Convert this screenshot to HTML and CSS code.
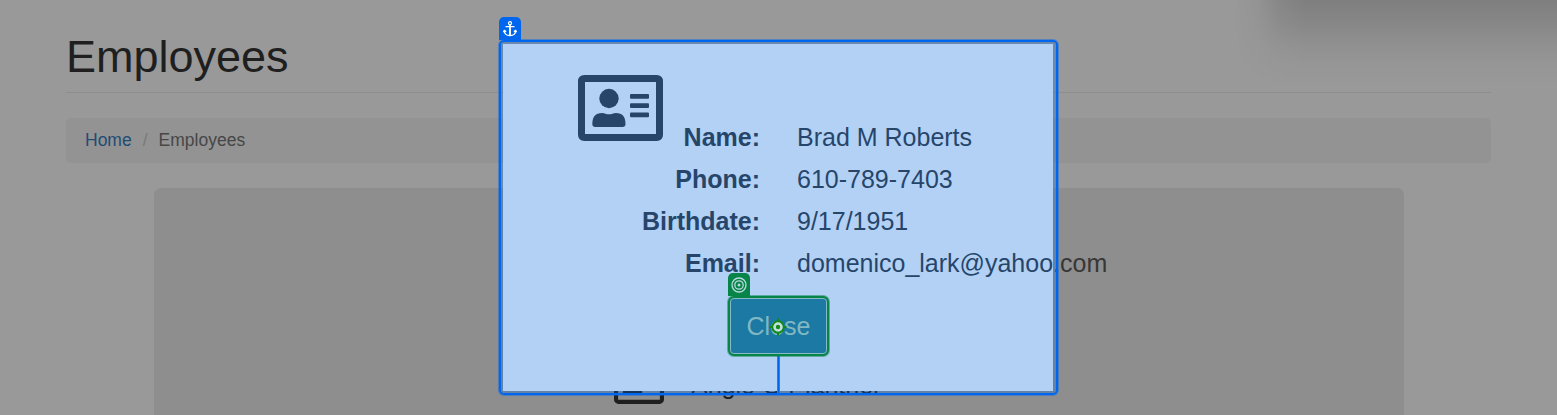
FILE: index.html
```
<!DOCTYPE html>
<html lang="en">
<head>
<meta charset="utf-8">
<title>Employees</title>
<link rel="stylesheet" href="styles.css">
</head>
<body>
<main class="page">
  <h1 class="title">Employees</h1>
  <nav class="breadcrumb"><a class="home">Home</a><span class="slash">/</span><span>Employees</span></nav>
  <section class="panel">
    <div class="entry">
      <svg class="entry-icon" viewBox="0 0 85 66"><rect x="3.5" y="3.5" width="78" height="59" rx="4" fill="none" stroke="currentColor" stroke-width="7"/><path d="M15 51V46Q15 38 24 38H40Q48 38 48 46V51Z" fill="currentColor"/></svg>
      <span class="entry-name">Angie G Plantner</span>
    </div>
  </section>
</main>
<div class="corner-shadow"></div>
<section class="modal">
  <div class="card">
    <svg class="id-icon" viewBox="0 0 85 66" fill="currentColor">
      <path fill-rule="evenodd" d="M6.500 0H78.500Q85 0 85 6.500V59.500Q85 66 78.500 66H6.500Q0 66 0 59.500V6.500Q0 0 6.500 0ZM7 7V59H78V7Z"/>
      <circle cx="31" cy="23.500" r="9.700"/>
      <path d="M14.300 49Q14.300 38 24 38Q26 38 27.500 38.700Q31 39.800 34.500 38.700Q36 38 38 38Q47.500 38 47.500 49Q47.500 52 44.500 52H17.300Q14.300 52 14.300 49Z"/>
      <rect x="52" y="19" width="19" height="4.700" rx="1"/><rect x="52" y="28.300" width="19" height="4.700" rx="1"/><rect x="52" y="37.600" width="19" height="4.700" rx="1"/>
    </svg>
    <dl class="details">
      <dt>Name:</dt><dd>Brad M Roberts</dd>
      <dt>Phone:</dt><dd>610-789-7403</dd>
      <dt>Birthdate:</dt><dd>9/17/1951</dd>
      <dt>Email:</dt><dd>domenico_lark@yahoo.com</dd>
    </dl>
  </div>
  <div class="highlight"></div>
  <span class="tag anchor-tag"><svg width="14" height="16" viewBox="0 0 14 16" fill="none" stroke="#fff" stroke-width="1.300"><circle cx="7" cy="2.200" r="1.500"/><path d="M2.500 5.600H11.500M1.200 9.500Q1.600 14.600 7 14.600Q12.400 14.600 12.800 9.500M.4 11.200L1.300 9.400L3.200 10.600M10.800 10.600L12.700 9.400L13.600 11.200"/><path d="M7 4V15" stroke-width="1.900"/></svg></span>
  <span class="connector"></span>
  <button class="close">Close</button>
  <span class="tag target-tag"><svg width="16" height="16" viewBox="0 0 16 16" fill="none" stroke="#b9d9df" stroke-width="1.300"><circle cx="8" cy="8" r="7"/><circle cx="8" cy="8" r="4.200"/><circle cx="8" cy="8" r="1.500" fill="#b9d9df" stroke="none"/></svg></span>
  <svg class="pointer" viewBox="0 0 18 18"><path d="M9 .5V17.500M.5 9H17.500" stroke="#128a18" stroke-width="2"/><circle cx="9" cy="9" r="5.700" fill="#c4dfe4" stroke="#128a18" stroke-width="1.900"/><circle cx="9" cy="9" r="2.200" fill="#128a18"/></svg>
</section>
</body>
</html>
```
FILE: styles.css
```
* { box-sizing: border-box; }
body { margin: 0; height: 415px; overflow: hidden; background: #999; font-family: "Liberation Sans", Arial, sans-serif; }
.page { margin: 0 66px; padding-top: 32px; }
.title { margin: 0; height: 61px; border-bottom: 1px solid #8e8e8e; font-size: 45px; line-height: 50px; font-weight: 400; color: #1f1f1f; }
.breadcrumb { margin-top: 25px; width: 1425px; height: 45px; padding: 0 19px; border-radius: 5px; background: #939393; display: flex; align-items: center; font-size: 17.500px; color: #474747; }
.home { color: #1f4c75; }
.slash { margin: 0 11px; color: #7a7a7a; }
.panel { margin: 25px 0 0 88px; width: 1250px; height: 227px; border-radius: 7px 7px 0 0; background: #8e8e8e; padding: 177px 0 0 460px; }
.entry { display: flex; align-items: flex-start; gap: 27px; color: #1f1f1f; }
.entry-icon { width: 50px; height: 39px; }
.entry-name { font-size: 25px; line-height: 40px; }
.corner-shadow { position: absolute; left: 1235px; top: 0; width: 322px; height: 85px; background: linear-gradient(rgba(0, 0, 0, .17), rgba(0, 0, 0, .115) 25px, rgba(0, 0, 0, .055) 45px, rgba(0, 0, 0, .015) 65px, transparent); mask-image: linear-gradient(90deg, transparent, rgba(0, 0, 0, .2) 22px, rgba(0, 0, 0, .7) 44px, #000 70px); }
.modal { position: absolute; left: 499px; top: 40px; width: 559px; height: 355px; padding: 4px 5px 4px 4px; }
.card { height: 347px; background: #fff; color: #373737; display: grid; grid-template-columns: 162px 1fr; padding-top: 31px; }
.id-icon { width: 85px; height: 66px; margin-left: 75px; }
.details { margin: 41px 0 0 -81px; display: grid; grid-template-columns: 176px 1fr; grid-auto-rows: 42px; column-gap: 37px; font-size: 25px; line-height: 42px; white-space: nowrap; align-content: start; }
.details dt { text-align: right; font-weight: 700; }
.details dd { margin: 0; }
.highlight { position: absolute; inset: 0; border: 2px solid #06e; border-radius: 5px; background: rgba(0, 102, 222, .3) padding-box; box-shadow: 0 0 0 1px rgba(0, 102, 238, .45); }
.tag { position: absolute; width: 22px; height: 23px; border-radius: 5px 5px 0 0; display: flex; align-items: center; justify-content: center; }
.anchor-tag { left: -.5px; top: -23px; background: #06e; }
.target-tag { left: 228.500px; top: 233px; background: #078448; }
.connector { position: absolute; left: 278px; top: 316px; width: 3px; height: 37px; background: linear-gradient(90deg, #2f7de0 1px, #06e 1px 2px, #2f7de0 2px); }
.close { position: absolute; left: 229px; top: 256px; width: 101px; height: 60px; padding: 0; border: 2px solid #078448; border-radius: 6px; background: #1b79a3; box-shadow: 0 0 0 1px rgba(7, 132, 72, .5), inset 0 0 0 1px #86b9c6; color: #80b8c4; font: 25px "Liberation Sans", Arial, sans-serif; }
.pointer { position: absolute; left: 270px; top: 278px; width: 18px; height: 18px; }
```
